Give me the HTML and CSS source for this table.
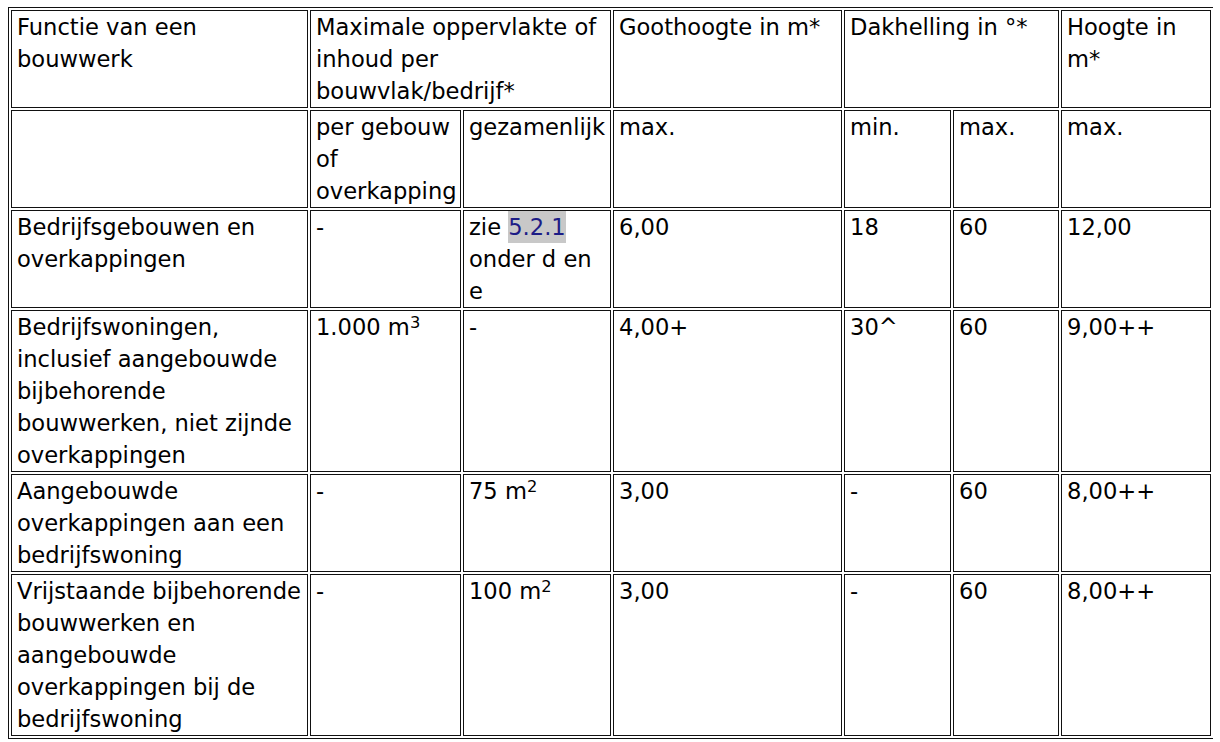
FILE: index.html
```html
<!DOCTYPE html>
<html lang="nl">
<head>
<meta charset="utf-8">
<title>Bouwregels</title>
<link rel="stylesheet" href="styles.css">
</head>
<body>
<table class="regels">
  <colgroup>
    <col class="c-func">
    <col class="c-per">
    <col class="c-gez">
    <col class="c-goot">
    <col class="c-min">
    <col class="c-max">
    <col class="c-hoog">
  </colgroup>
  <tbody>
    <tr>
      <td>Functie van een bouwwerk</td>
      <td colspan="2">Maximale oppervlakte of inhoud per <span class="nowrap">bouwvlak/bedrijf*</span></td>
      <td>Goothoogte in m*</td>
      <td colspan="2">Dakhelling in °*</td>
      <td>Hoogte in m*</td>
    </tr>
    <tr>
      <td></td>
      <td>per gebouw of overkapping</td>
      <td>gezamenlijk</td>
      <td>max.</td>
      <td>min.</td>
      <td>max.</td>
      <td>max.</td>
    </tr>
    <tr>
      <td>Bedrijfsgebouwen en overkappingen</td>
      <td>-</td>
      <td>zie <span class="ref">5.2.1</span> onder d en e</td>
      <td>6,00</td>
      <td>18</td>
      <td>60</td>
      <td>12,00</td>
    </tr>
    <tr>
      <td>Bedrijfswoningen, inclusief aangebouwde bijbehorende bouwwerken, niet zijnde overkappingen</td>
      <td>1.000 m<sup>3</sup></td>
      <td>-</td>
      <td>4,00+</td>
      <td>30^</td>
      <td>60</td>
      <td>9,00++</td>
    </tr>
    <tr>
      <td>Aangebouwde overkappingen aan een bedrijfswoning</td>
      <td>-</td>
      <td>75 m<sup>2</sup></td>
      <td>3,00</td>
      <td>-</td>
      <td>60</td>
      <td>8,00++</td>
    </tr>
    <tr>
      <td>Vrijstaande bijbehorende bouwwerken en aangebouwde overkappingen bij de bedrijfswoning</td>
      <td>-</td>
      <td>100 m<sup>2</sup></td>
      <td>3,00</td>
      <td>-</td>
      <td>60</td>
      <td>8,00++</td>
    </tr>
  </tbody>
</table>
</body>
</html>
```

FILE: styles.css
```css
html, body {
  background: #ffffff;
}

body {
  margin: 7px 7px 7px 8px;
  font-family: "DejaVu Sans", Verdana, sans-serif;
  font-size: 22.6px;
  line-height: 32px;
  color: #000000;
}

.regels {
  table-layout: fixed;
  width: 1206px;
  border: 1px solid #111111;
  border-collapse: separate;
  border-spacing: 2px 2px;
}

.c-func { width: 297px; }
.c-per  { width: 151px; }
.c-gez  { width: 148px; }
.c-goot { width: 229px; }
.c-min  { width: 107px; }
.c-max  { width: 106px; }
.c-hoog { width: 150px; }

.regels td {
  box-sizing: border-box;
  border: 1px solid #111111;
  padding: 0 0 0 5px;
  vertical-align: top;
  text-align: left;
  font-size: 22.6px;
  line-height: 32px;
}

.nowrap {
  white-space: nowrap;
}

.ref {
  display: inline-block;
  background: #c8c8c8;
  color: #1c1c86;
}

sup {
  font-size: 0.72em;
  line-height: 0;
  vertical-align: 0.45em;
}
```
